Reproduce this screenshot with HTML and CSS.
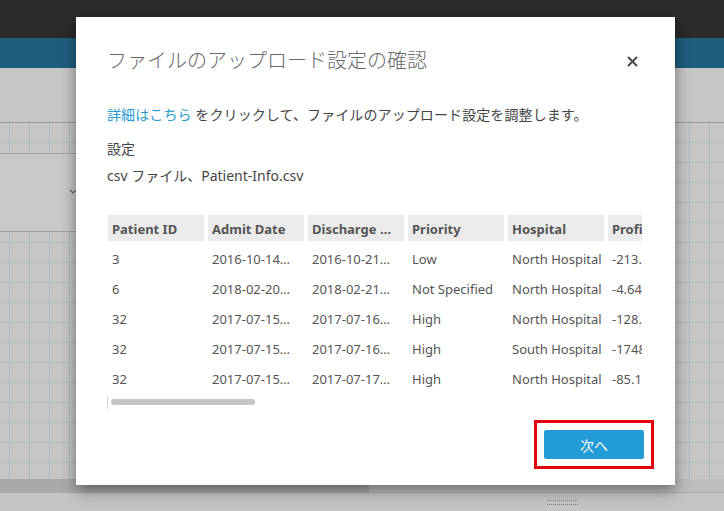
FILE: index.html
```html
<!DOCTYPE html>
<html lang="ja">
<head>
    <meta charset="UTF-8">
    <title>ファイルのアップロード設定の確認</title>
    <link rel="stylesheet" href="styles.css">
</head>
<body>
    <!-- app behind the dialog -->
    <div class="app">
        <div class="topbar"></div>
        <div class="navbar"></div>
        <div class="toolbar"></div>
        <div class="canvas">
            <div class="panel">
                <svg class="chev" width="8" height="6" viewBox="0 0 8 6"><path d="M1 1l3 3 3-3" fill="none" stroke="#666" stroke-width="1.2"/></svg>
            </div>
        </div>
        <div class="statusbar">
            <div class="status-left"></div>
            <div class="status-right"></div>
        </div>
        <div class="footer">
            <span class="grip"></span>
        </div>
    </div>

    <!-- dialog -->
    <div class="modal">
        <div class="modal-head">
            <h2 class="title">ファイルのアップロード設定の確認</h2>
            <svg class="close" width="11" height="11" viewBox="0 0 11 11"><path d="M1.5 1.5l8 8M9.5 1.5l-8 8" stroke="#4a4a4a" stroke-width="2" stroke-linecap="round"/></svg>
        </div>
        <p class="intro"><a href="#">詳細はこちら</a> をクリックして、ファイルのアップロード設定を調整します。</p>
        <p class="label">設定</p>
        <p class="file">csv ファイル、Patient-Info.csv</p>

        <div class="preview">
            <div class="sheet">
                <div class="th">Patient ID</div>
                <div class="th">Admit Date</div>
                <div class="th">Discharge …</div>
                <div class="th">Priority</div>
                <div class="th">Hospital</div>
                <div class="th">Profit</div>

                <div class="td">3</div>
                <div class="td">2016-10-14…</div>
                <div class="td">2016-10-21…</div>
                <div class="td">Low</div>
                <div class="td">North Hospital</div>
                <div class="td">-213.52</div>

                <div class="td">6</div>
                <div class="td">2018-02-20…</div>
                <div class="td">2018-02-21…</div>
                <div class="td">Not Specified</div>
                <div class="td">North Hospital</div>
                <div class="td">-4.64</div>

                <div class="td">32</div>
                <div class="td">2017-07-15…</div>
                <div class="td">2017-07-16…</div>
                <div class="td">High</div>
                <div class="td">North Hospital</div>
                <div class="td">-128.16</div>

                <div class="td">32</div>
                <div class="td">2017-07-15…</div>
                <div class="td">2017-07-16…</div>
                <div class="td">High</div>
                <div class="td">South Hospital</div>
                <div class="td">-1748.5</div>

                <div class="td">32</div>
                <div class="td">2017-07-15…</div>
                <div class="td">2017-07-17…</div>
                <div class="td">High</div>
                <div class="td">North Hospital</div>
                <div class="td">-85.12</div>
            </div>
        </div>
        <div class="hscroll"><div class="thumb"></div></div>

        <div class="modal-foot">
            <div class="highlight">
                <button class="btn-next">次へ</button>
            </div>
        </div>
    </div>
</body>
</html>
```

FILE: styles.css
```css
body {
    margin: 0;
    width: 724px;
    height: 511px;
    overflow: hidden;
    position: relative;
    font-family: "Noto Sans", "Noto Sans CJK JP", sans-serif;
    background: #c3c3c3;
}
.app {
    display: flex;
    flex-direction: column;
    height: 511px;
}
.topbar {
    height: 38px;
    background: #2b2b2b;
}
.navbar {
    height: 30px;
    background: #1e5e7d;
}
.toolbar {
    height: 54px;
    background: #c6c6c6;
    border-bottom: 1px solid #9a9a9a;
}
.canvas {
    position: relative;
    height: 356px;
    background-color: #c6c6c6;
    background-image: linear-gradient(to right, #abbcc3 1px, transparent 1px),
                      linear-gradient(to bottom, #abbcc3 1px, transparent 1px);
    background-size: 20px 20px;
    background-position: 9px 19px;
}
.panel {
    position: absolute;
    left: 0;
    top: 30px;
    width: 80px;
    height: 77px;
    background: #c8c8c8;
    border-top: 1px solid #a0a0a0;
    border-bottom: 1px solid #a0a0a0;
}
.chev {
    position: absolute;
    left: 69px;
    top: 35px;
}
.statusbar {
    display: flex;
    height: 14px;
}
.status-left {
    width: 369px;
    background: #a9a9a9;
}
.status-right {
    flex: 1;
    background: #bdbdbd;
    border-bottom: 1px solid #aaaaaa;
}
.footer {
    flex: 1;
    background: #c4c4c4;
}
.grip {
    display: block;
    width: 31px;
    height: 3px;
    margin: 7px 0 0 547px;
    border-top: 1px dotted #7f7f7f;
    border-bottom: 1px dotted #7f7f7f;
}

/* dialog */
.modal {
    position: absolute;
    left: 76px;
    top: 17px;
    width: 599px;
    height: 468px;
    box-sizing: border-box;
    padding: 30px 31px 0 31px;
    background: #fff;
    box-shadow: 0 5px 14px rgba(0, 0, 0, 0.45);
}
.modal-head {
    display: flex;
    justify-content: space-between;
    align-items: center;
    height: 28px;
}
.title {
    margin: 0;
    font-size: 20px;
    font-weight: 300;
    line-height: 28px;
    color: #6a6a6a;
}
.close {
    margin-right: 6px;
}
.intro, .label, .file {
    margin: 0;
    font-size: 14px;
    line-height: 20px;
    color: #444;
}
.intro {
    margin-top: 30px;
    letter-spacing: 0.1px;
}
.intro a {
    color: #2a9bd0;
    text-decoration: none;
}
.label {
    margin-top: 14px;
}
.file {
    margin-top: 7px;
}
.preview {
    margin-top: 29px;
    width: 535px;
    overflow: hidden;
}
.sheet {
    display: grid;
    grid-template-columns: repeat(6, 96px);
    column-gap: 4px;
    width: max-content;
    padding-left: 1px;
    font-size: 13px;
    color: #555;
}
.th {
    height: 26px;
    line-height: 28px;
    margin-bottom: 2px;
    padding: 0 4px;
    background: #ebebeb;
    font-weight: 700;
    white-space: nowrap;
    overflow: hidden;
}
.td {
    height: 30px;
    line-height: 32px;
    padding: 0 4px;
    white-space: nowrap;
}
.hscroll {
    height: 13px;
    margin-top: 3px;
    box-sizing: border-box;
    padding: 3px 0 0 3px;
    border-left: 1px solid #d8d8d8;
}
.thumb {
    width: 144px;
    height: 6px;
    border-radius: 3px;
    background: #c6c6c6;
}
.modal-foot {
    display: flex;
    justify-content: flex-end;
    margin-top: 11px;
    margin-right: -10px;
}
.highlight {
    padding: 7px;
    border: 3px solid #e3000f;
}
.btn-next {
    display: block;
    width: 100px;
    height: 29px;
    border: 0;
    border-radius: 2px;
    background: #229bd7;
    color: #fff;
    font-family: "Noto Sans CJK JP", sans-serif;
    font-size: 14px;
}
```
